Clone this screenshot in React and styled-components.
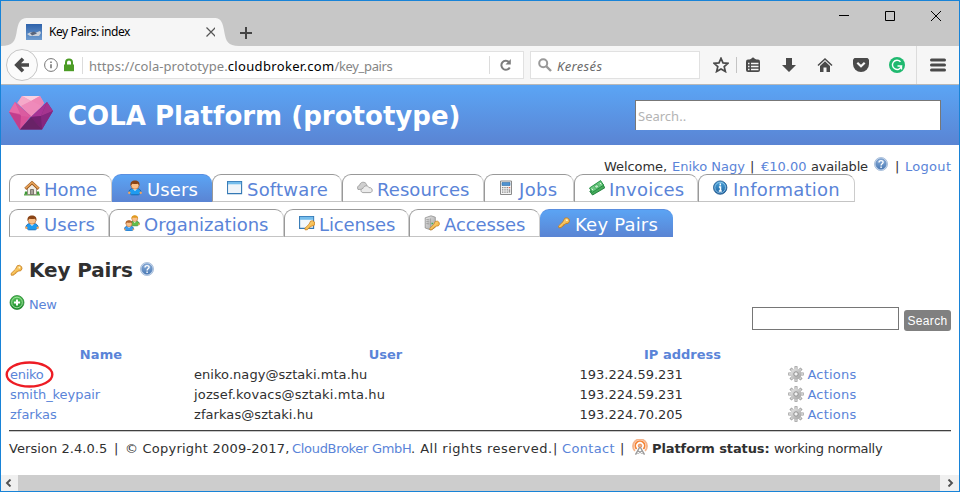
import React from "react";
import styled, { createGlobalStyle, css } from "styled-components";

const LINK = "#5a84d8";
const INK = "#303030";
const blueFade = "linear-gradient(#5ba5f5, #5a84d3)";

const Global = createGlobalStyle`
  * { box-sizing: border-box; }
  body { margin: 0; background: #fff; }
  svg { display: block; flex: none; }
`;

/* ---------- window frame ---------- */
const Window = styled.div`
  width: 960px; height: 492px; border: 1px solid #1883d7; background: #fff;
  display: flex; flex-direction: column; overflow: hidden;
  font: 13px/15px "DejaVu Sans", sans-serif; color: ${INK};
`;
const TitleBar = styled.div`
  height: 45px; flex: none; background: #c7c7c7; display: flex; align-items: flex-end;
`;
const TabBody = styled.div`
  width: 190px; height: 28px; background: #f6f6f6; display: flex; align-items: center;
  margin: 0 -1px; font: 12px/16px "Noto Sans", sans-serif; color: #000; letter-spacing: -0.45px;
`;
const TabLabel = styled.span`margin: 0 auto 0 7px;`;
const NewTab = styled.div`margin: 0 0 7px 1px;`;
const WindowButtons = styled.div`
  margin-left: auto; align-self: flex-start; display: flex; gap: 35px; padding: 10px 17px 0 0;
`;
const Toolbar = styled.div`
  height: 39px; flex: none; background: #f6f6f6; border-bottom: 1px solid #b8b8b8;
  display: flex; align-items: center; padding-left: 5px;
`;
const BackButton = styled.div`
  width: 32px; height: 32px; border: 1px solid #c6c6c6; border-radius: 50%; background: #fbfbfb;
  display: flex; align-items: center; justify-content: center; z-index: 1; flex: none;
`;
const AddressBar = styled.div`
  width: 502px; height: 28px; margin-left: -16px; padding-left: 19px; flex: none;
  border: 1px solid #e1e1e1; background: #fff; display: flex; align-items: center;
  svg + svg { margin-left: 5px; }
`;
const Separator = styled.span`
  flex: none; width: 1px; height: ${p => p.$h}px; background: ${p => p.$c || "#dcdcdc"};
`;
const Url = styled.span`
  font: 13px/18px "Noto Sans", sans-serif; color: #858585; display: flex;
  margin: 1px 0 0 6px; width: 400px; white-space: pre;
`;
const UrlPart = styled.span`
  color: ${p => p.$host ? "#000" : "#858585"}; letter-spacing: ${p => p.$ls}px;
`;
const BrowserSearch = styled.div`
  width: 170px; height: 28px; margin-left: 6px; padding: 1px 0 0 7px; flex: none; border: 1px solid #e1e1e1; background: #fff;
  display: flex; align-items: center; gap: 5px;
  font: italic 13px/16px "Noto Sans", sans-serif; color: #6b6b6b; letter-spacing: 0.35px;
`;
const Tools = styled.div`
  display: flex; align-items: center; padding-left: 13px; height: 38px;
`;
const Tool = styled.span`margin-left: ${p => p.$gap || 0}px;`;

/* ---------- page ---------- */
const Banner = styled.header`
  height: 60px; flex: none; background: ${blueFade}; display: flex; align-items: flex-start; padding-left: 8px;
  > svg { margin-top: 10px; }
`;
const BannerTitle = styled.h1`
  margin: 16px 0 0 15px; font: bold 26px/30px "DejaVu Sans", sans-serif; letter-spacing: 0.02px; color: #fff; white-space: nowrap;
`;
const BannerSearch = styled.div`
  width: 306px; height: 30px; margin: 15px 18px 0 auto; padding: 7px 0 0 2px;
  border: 1px solid #777; border-bottom: 0; background: #fff;
  font: 13px/16px "Noto Sans", sans-serif; color: #b4b4b4;
`;
const Page = styled.main`
  flex: 1; padding: 0 8px; display: flex; flex-direction: column; min-height: 0;
`;
const Run = styled.span`
  flex: none; white-space: pre; width: ${p => p.$w}px; letter-spacing: ${p => p.$ls || 0}px;
  ${p => p.$link && css`color: ${LINK};`}
  ${p => p.$bold && css`font-weight: bold;`}
`;
const Account = styled.div`
  height: 29px; padding: 14px 0 0 595px; display: flex; align-items: flex-start;
  svg { margin: -2px 7px 0 0; }
`;
const Nav = styled.nav`
  display: flex; height: 28px; flex: none; margin-bottom: 7px; align-self: flex-start;
`;
const NavTab = styled.a`
  width: ${p => p.$w}px; height: 28px; padding: 4px 0 0 14px; display: flex; color: ${LINK};
  font-size: 18px; line-height: 21px; letter-spacing: ${p => p.$ls}px; white-space: nowrap;
  border: 1px solid #999; border-right-color: #ccc; border-bottom-color: #c4c4c4; border-radius: 9px 9px 0 0; background: #fff;
  svg { margin: 1px 4px 0 0; }
  ${p => p.$active && css`
    color: #fff; background: ${blueFade}; background-origin: border-box; border-color: #5b8fe0 transparent transparent;
  `}
`;
const Heading = styled.h2`
  margin: 15px 0 0; height: 22px; display: flex; font-size: 20px; line-height: 23px; letter-spacing: -0.13px;
  svg:first-child { margin: 4px 5px 0 0; }
  svg:last-child { margin: 3px 0 0 7px; }
`;
const ActionBar = styled.div`
  height: 64px; display: flex; align-items: flex-start; padding-top: 16px; flex: none;
`;
const NewLink = styled.a`
  display: flex; gap: 4px; color: ${LINK}; letter-spacing: -0.2px;
  svg { margin-top: -2px; }
`;
const Filter = styled.div`
  width: 147px; height: 23px; margin: 10px 5px 0 auto; border: 1px solid #767676;
`;
const FilterButton = styled.button`
  width: 47px; height: 21px; margin: 13px 0 0; padding: 0; border: 0; border-radius: 3px; background: #808080; color: #fff;
  font: 12px/20px "Liberation Sans", sans-serif; letter-spacing: 0.33px;
`;
const Table = styled.div`
  width: 942px; display: grid; grid-template-columns: 184px 385.5px 209px 1fr; grid-auto-rows: 20px;
  border-bottom: 1px solid #404040; box-shadow: 0 1px #c9c9c9; height: 86px; flex: none; line-height: 20px;
`;
const HeadCell = styled.div`
  color: ${LINK}; font-weight: bold; text-align: center; letter-spacing: ${p => p.$ls || 0}px;
  width: ${p => p.$w}px;
`;
const Cell = styled.div`
  padding-left: 1px; white-space: nowrap; letter-spacing: ${p => p.$ls || 0}px; position: relative;
  color: ${p => p.$link ? LINK : INK};
`;
const ActionCell = styled.div`
  display: flex; gap: 4px; color: ${LINK}; letter-spacing: 0.2px;
  svg { margin-top: 1px; }
`;
const Circled = styled.svg`
  position: absolute; left: -5px; top: -5px; overflow: visible;
`;
const Footer = styled.footer`
  display: flex; padding-top: 10px; flex: none;
  svg { margin: -2px 4px 0 0; }
`;
const ScrollBar = styled.div`
  height: 16px; flex: none; background: #f0f0f0; display: flex; align-items: center; justify-content: space-between; padding: 0 5px 0 4px;
`;
const Thumb = styled.div`height: 16px; width: 922px; margin-right: 1px; background: #cdcdcd;`;

/* ---------- icons ---------- */
const Svg = ({ w = 16, h = 16, vb, children, ...rest }) => (
  <svg width={w} height={h} viewBox={vb || `0 0 ${w} ${h}`} fill="none" {...rest}>{children}</svg>
);
const Gradients = () => (
  <Svg w={0} h={0}>
    <defs>
      <linearGradient id="blueBall" x1="0" y1="0" x2="0" y2="1"><stop stopColor="#4aa5dc" /><stop offset="1" stopColor="#1b5f9e" /></linearGradient>
      <linearGradient id="helpBall" x1="0" y1="0" x2="0" y2="1"><stop stopColor="#8fb2dc" /><stop offset="1" stopColor="#4878b4" /></linearGradient>
      <linearGradient id="greenBall" x1="0" y1="0" x2="0" y2="1"><stop stopColor="#55c457" /><stop offset="1" stopColor="#1b8a2c" /></linearGradient>
      <linearGradient id="gold" x1="0" y1="0" x2="1" y2="1"><stop stopColor="#ffe79a" /><stop offset="1" stopColor="#f0a020" /></linearGradient>
      <linearGradient id="steel" x1="0" y1="0" x2="1" y2="1"><stop stopColor="#e8e8e8" /><stop offset="1" stopColor="#a0a0a0" /></linearGradient>
      <linearGradient id="sky" x1="0" y1="0" x2="0" y2="1"><stop stopColor="#2e62ab" /><stop offset="1" stopColor="#6f9dd0" /></linearGradient>
    </defs>
  </Svg>
);
const HomeIcon = () => (
  <Svg>
    <path d="M0 14.2h16v1.3H0z" fill="#5aa546" /><path d="M1 11.5h3v3H0.5zM12 11.5h3l.5 3h-3.5z" fill="#3f9a38" />
    <path d="M3.5 8L8 4l4.5 4v6.5h-9z" fill="#f1ece4" stroke="#8c8378" strokeWidth=".8" />
    <path d="M6.5 9.5h3v5h-3z" fill="#a9a39a" stroke="#6a645c" strokeWidth=".8" />
    <path d="M1.3 8.8L8 2.7l6.7 6.1" stroke="#9d5a1d" strokeWidth="3" /><path d="M1.5 8.4L8 2.5l6.5 5.9" stroke="#e8a45c" strokeWidth="1.5" />
  </Svg>
);
const Person = ({ hair = "#8a4416", body = "#1f9bf0", edge = "#1264b0" }) => (
  <>
    <path d="M.8 12.6C.9 10 3 8.700 4.600 8.400h4.800c1.600.3 3.700 1.600 3.800 4.200L10.400 14.800H3.600z" fill={body} stroke={edge} strokeWidth=".9" />
    <path d="M4.6 8.400L7 11l2.400-2.600z" fill="#fff" /><circle cx="1.300" cy="12.700" r="1.200" fill="#f6a55e" /><circle cx="12.700" cy="12.700" r="1.200" fill="#f6a55e" />
    <ellipse cx="7" cy="5.500" rx="3.900" ry="3.700" fill="#fbc088" stroke="#a8602c" strokeWidth=".6" />
    <path d="M2.600 6C1.900 2.300 4.200.6 7 .6s5.100 1.700 4.400 5.400c-.6-1.500-1.100-2.200-1.700-2.300-1.800.5-3.600.4-5.100 0-.7.2-1.400 1-2 2.300z" fill={hair} />
  </>
);
const UserIcon = () => <Svg vb="-1 0 16 16"><Person /></Svg>;
const GroupIcon = () => (
  <Svg><g transform="translate(5.500 -.3) scale(.75)"><Person hair="#e09a1c" body="#62bd4b" edge="#2f7d28" /></g><g transform="translate(-.3 4.700) scale(.76)"><Person hair="#b0632c" body="#3e9cec" /></g></Svg>
);
const WindowIcon = () => (
  <Svg h={16}><path d="M.6 1.6h14v12H.6z" fill="#f3f8fc" stroke="#3378b4" strokeWidth="1.1" /><path d="M1 1.800h13.200v2.600H1z" fill="#75bdec" /><path d="M1.4 4.800h12.400v8.200H1.4z" fill="#eff4f9" /></Svg>
);
const KeyShape = () => (
  <path d="M8.3 1.2l2.3-.4 2 1.4.4 2.2-1.3 1.9-2.4.2-1 1.100-1.200.1-.3 1.300-1.300.3-.6 1.200-2.500.3-.4-1.700 4.500-4.400z" fill="url(#gold)" stroke="#c47a18" strokeWidth=".8" />
);
const KeyIcon = ({ w = 16, h = 16, vb = "-1.500 -2 16 16" }) => (
  <Svg w={w} h={h} vb={vb}><KeyShape /><circle cx="10.4" cy="3.2" r=".9" fill="#fff7d0" /></Svg>
);
const LicenseIcon = () => (
  <Svg><path d="M.6 1.6h14v11.800H.6z" fill="#f3f8fc" stroke="#3378b4" strokeWidth="1.1" /><path d="M1 1.800h13.200v3H1z" fill="#75bdec" /><g transform="translate(4 5) scale(.92)"><KeyShape /></g></Svg>
);
const CloudIcon = () => (
  <Svg>
    <path d="M1 9.5C-.2 7.4 1 5.6 2.6 5.3 3.2 1.4 8.5 1.2 9.6 4.6L10.5 9z" fill="#cfcfcf" stroke="#999" strokeWidth=".8" />
    <path d="M6 12.6c-2.600-.3-2.800-3.700 0-4.200.8-3.300 5-3.300 6-.8 3.600-.4 4.500 4.600 1.200 5z" fill="#ebebeb" stroke="#9d9d9d" strokeWidth=".9" />
  </Svg>
);
const CalcIcon = () => (
  <Svg w={16}><path d="M1.500 1h11v13.500h-11z" fill="#f4f4f4" stroke="#8a8a8a" /><path d="M3 2.500h8v3H3z" fill="#4e93d2" stroke="#2d6ba6" strokeWidth=".6" />
    {[7, 9.2, 11.4].map(y => [3, 5.3, 7.6].map(x => <path key={x + "-" + y} d={`M${x} ${y}h1.4v1.3h-1.4z`} fill="#8b8b8b" />))}
    <path d="M9.700 7h1.500v1.300H9.700z" fill="#e46a50" /><path d="M9.700 9.200h1.500v3.500H9.700z" fill="#9a9a9a" /></Svg>
);
const MoneyIcon = () => (
  <Svg w={16} vb="0 0 16 16"><path d="M.8 11.300L13.400 3.500l2.400 4.300L3.500 15z" fill="#47a95b" stroke="#157b33" strokeWidth=".9" />
    <path d="M.5 8L11.600.6l3 4.600L3.200 12.400z" fill="#6cc880" stroke="#1b8b3c" strokeWidth=".9" /><ellipse cx="7.600" cy="6.500" rx="2" ry="1.700" fill="#c2ebc8" stroke="#2f9c4a" strokeWidth=".7" /><path d="M2.800 8.600l1 1.400M11.200 3l1 1.400" stroke="#e6f8e8" /></Svg>
);
const InfoIcon = () => (
  <Svg vb="0 0 16 16"><circle cx="7.200" cy="7.600" r="6.700" fill="url(#blueBall)" stroke="#1c5288" strokeWidth=".8" /><circle cx="7.200" cy="7.600" r="5.300" stroke="#a9d5f0" strokeWidth=".7" /><path d="M7.300 3.600v1.800M5.900 6.900h1.600v4M5.800 11.100h3" stroke="#fff" strokeWidth="1.500" /></Svg>
);
const ServerKeyIcon = () => (
  <Svg><path d="M1.200 2.800L7 .8l4.300 1.400v10L7 15l-5.800-2z" fill="url(#steel)" stroke="#8f8f8f" strokeWidth=".8" /><path d="M6.600 3.400v11" stroke="#999" strokeWidth=".8" /><path d="M2.400 4.600l3 .3M2.400 6.600l3 .3M2.400 8.600l3 .3" stroke="#8f8f8f" strokeWidth=".8" /><path d="M7.500 8.500h1.600" stroke="#41b34a" strokeWidth="1.400" /><g transform="translate(4 5.400) scale(.88)"><KeyShape /></g></Svg>
);
const HelpIcon = () => (
  <Svg w={14} h={14}><circle cx="7" cy="7" r="6.600" fill="#c8d9ee" stroke="#8da9cc" strokeWidth=".6" /><circle cx="7" cy="7" r="5.200" fill="url(#helpBall)" stroke="#5a83b8" strokeWidth=".6" /><path d="M5 5.600c0-2.600 4.100-2.500 4.100-.3C9.100 6.800 7.100 6.700 7.100 8.400M7.100 9.500v1.400" stroke="#fff" strokeWidth="1.400" /></Svg>
);
const PlusIcon = () => (
  <Svg w={16} h={15} vb="-.5 0 16 15"><circle cx="7.500" cy="7.500" r="7" fill="url(#greenBall)" stroke="#1d7c2a" strokeWidth=".7" /><circle cx="7.500" cy="7.500" r="5.300" stroke="#b5e6b3" strokeWidth=".8" /><path d="M7.500 4.400v6.200M4.400 7.500h6.200" stroke="#fff" strokeWidth="2" /></Svg>
);
const GearIcon = () => (
  <Svg><g stroke="#979797" strokeWidth="3"><path d="M8 .3v15.400M.3 8h15.400M2.500 2.500l11 11M13.500 2.500l-11 11" /></g><g stroke="#cfcfcf" strokeWidth="1.800"><path d="M8 1v14M1 8h14M3 3l10 10M13 3L3 13" /></g><circle cx="8" cy="8" r="5.400" fill="url(#steel)" /><circle cx="8" cy="8" r="2.200" fill="#f2f2f2" stroke="#909090" strokeWidth="1" /></Svg>
);
const AntennaIcon = () => (
  <Svg><path d="M2.900 12A7 7 0 1 1 13.100 12" stroke="#f4b48c" strokeWidth="1.800" /><path d="M4.600 10a4.700 4.700 0 1 1 6.800 0" stroke="#f58436" strokeWidth="1.800" /><circle cx="8" cy="6.800" r="1.800" fill="#f6ae80" stroke="#d86a2c" strokeWidth=".6" /><path d="M7.800 8L3.500 15.700M8.200 8l4.300 7.700M6 12l4.500 2.500M10 12l-4.500 2.500" stroke="#999" strokeWidth="1.400" /></Svg>
);
const LogoIcon = () => (
  <Svg w={44} h={36}>
    <path d="M13 1h18l4 7-13 13L8 8z" fill="#f191bd" /><path d="M13 1h18l-9 5z" fill="#fad0e1" /><path d="M22 6L12 11.500l-3-4L13 1z" fill="#f5a9c9" /><path d="M31 1l4 7-2 3.500L22 6z" fill="#ee86b5" /><path d="M12 11l10-5 11 5.500L22 22z" fill="#ef8aba" />
    <path d="M6 7L0 17l11 18 11-14z" fill="#d95199" /><path d="M6 7l6 12-12-2z" fill="#e76ba9" /><path d="M0 17l12 3-1 15z" fill="#c23e8c" /><path d="M6 7l16 15-10-1z" fill="#db5ba0" />
    <path d="M38 7l6 9-11 18.500H11L22 22z" fill="#85267f" /><path d="M38 7l-6 14-10 1z" fill="#a83395" /><path d="M38 7l6 9-12 5z" fill="#a5348f" /><path d="M22 22l11-1 0 13.500z" fill="#742070" /><path d="M22 22L11 34.500h22z" fill="#692267" /><path d="M32 21l12-5-11 18.500z" fill="#85267f" />
  </Svg>
);

const MAIN = [
  ["Home", HomeIcon, 103, -0.03], ["Users", UserIcon, 100, 0.1, true], ["Software", WindowIcon, 130, 0.2], ["Resources", CloudIcon, 142, 0.06],
  ["Jobs", CalcIcon, 90, 0.35], ["Invoices", MoneyIcon, 124, 0.2], ["Information", InfoIcon, 157, 0.25],
];
const SUB = [
  ["Users", UserIcon, 100, 0.1], ["Organizations", GroupIcon, 175, 0], ["Licenses", LicenseIcon, 125, -0.12],
  ["Accesses", ServerKeyIcon, 131, -0.1], ["Key Pairs", KeyIcon, 133, 0.2, true],
];
const ROWS = [
  ["eniko", "eniko.nagy@sztaki.mta.hu", "193.224.59.231", -0.3, 0.05],
  ["smith_keypair", "jozsef.kovacs@sztaki.mta.hu", "193.224.59.231", -0.05, 0.16],
  ["zfarkas", "zfarkas@sztaki.hu", "193.224.70.205", 0, 0.07],
];
const Tabs = ({ items }) => (
  <Nav>{items.map(([label, Icon, w, ls, active]) => <NavTab key={label} $w={w} $ls={ls} $active={active}><Icon />{label}</NavTab>)}</Nav>
);

const Browser = () => (
  <>
    <TitleBar>
      <Svg w={26} h={28}><path d="M0 28C12 28 14 23 15.500 15C17 5 19 0 26 0V28z" fill="#f6f6f6" /></Svg>
      <TabBody>
        <Svg><path d="M0 0h16v16H0z" fill="url(#sky)" /><path d="M1 10l4-2 4 1 5-2 1 2-2 3H4z" fill="#ccd2da" /><path d="M4 9l4-1.500 3 2-5 2z" fill="#59657a" /></Svg>
        <TabLabel>Key Pairs: index</TabLabel>
        <Svg w={10} h={10}><path d="M.5.5l9 9M9.500.5l-9 9" stroke="#555" strokeWidth="1.200" /></Svg>
      </TabBody>
      <Svg w={24} h={28}><path d="M24 28C13 28 11 23 9.500 15C8 5 6 0 0 0V28z" fill="#f6f6f6" /></Svg>
      <NewTab><Svg w={12} h={12}><path d="M6 0v12M0 6h12" stroke="#444" strokeWidth="2" /></Svg></NewTab>
      <WindowButtons>
        <Svg w={11} h={11}><path d="M0 4.500h10" stroke="#000" /></Svg>
        <Svg w={11} h={11}><path d="M.5.5h9v9h-9z" stroke="#000" /></Svg>
        <Svg w={11} h={11}><path d="M0 0l10 10M10 0L0 10" stroke="#000" /></Svg>
      </WindowButtons>
    </TitleBar>
    <Toolbar>
      <BackButton><Svg><path d="M9 1.800L2.800 8 9 14.200M3.500 8H15" stroke="#4a4a4a" strokeWidth="3.600" /></Svg></BackButton>
      <AddressBar>
        <Svg w={16}><circle cx="9" cy="8" r="6.400" stroke="#777" /><path d="M9 4.500v1.500M9 7.300v4" stroke="#777" strokeWidth="1.600" /></Svg>
        <Svg w={12}><path d="M3 8V5.500a3 3 0 0 1 6 0V8" stroke="#4c9c26" strokeWidth="2" /><path d="M1 7.500h10v6.700H1z" fill="#4c9c26" /></Svg>
        <Tool $gap={7}><Separator as="div" $h={17} /></Tool>
        <Url><UrlPart $ls={0.06}>https://cola-prototype.</UrlPart><UrlPart $host $ls={0.33}>cloudbroker.com</UrlPart><UrlPart $ls={-0.35}>/key_pairs</UrlPart></Url>
        <Separator $h={18} />
        <Tool $gap={9}><Svg w={13} h={14}><path d="M10.800 9.500A4.500 4.500 0 1 1 10 4" stroke="#7c7c7c" strokeWidth="2" /><path d="M11.800 1v5.500H6.500z" fill="#7c7c7c" /></Svg></Tool>
      </AddressBar>
      <BrowserSearch><Svg w={14} h={15}><circle cx="5.200" cy="5.200" r="4" stroke="#999" strokeWidth="2" /><path d="M8 8l5 5" stroke="#999" strokeWidth="2.400" /></Svg><span>Keresés</span></BrowserSearch>
      <Tools>
        <Svg><path d="M8 1.300l2 4.600 5 .4-3.800 3.300 1.200 4.900L8 11.900l-4.400 2.600 1.200-4.900L1 6.300l5-.4z" stroke="#4a4a4a" strokeWidth="1.700" /></Svg>
        <Tool $gap={7}><Separator as="div" $h={16} $c="#c4c4c4" /></Tool>
        <Tool $gap={8}><Svg><path d="M3 2.500h10q2 0 2 2V13q0 2-2 2H3q-2 0-2-2V4.500q0-2 2-2z" fill="#4a4a4a" /><path d="M4.500 3L8 .2 11.500 3z" fill="#4a4a4a" /><path d="M3 6.500h1.500M6 6.500h7.500M3 9.500h1.500M6 9.500h7.500M3 12.500h1.500M6 12.500h7.500" stroke="#f6f6f6" strokeWidth="1.700" /></Svg></Tool>
        <Tool $gap={20}><Svg><path d="M5 1h6v7h4l-7 7-7-7h4z" fill="#4a4a4a" /></Svg></Tool>
        <Tool $gap={20}><Svg><path d="M1 8.500L8 2l7 6.500" stroke="#4a4a4a" strokeWidth="1.500" /><path d="M3 9l5-4.700L13 9v6H9.500v-4.500h-3V15H3z" fill="#4a4a4a" /></Svg></Tool>
        <Tool $gap={20}><Svg><path d="M1.500 1h13L16 2.500V7a8 8 0 0 1-16 0V2.500z" fill="#4a4a4a" /><path d="M4.300 5.800L8 9.300l3.700-3.500" stroke="#f6f6f6" strokeWidth="2.200" /></Svg></Tool>
        <Tool $gap={20}><Svg><circle cx="8" cy="8" r="8" fill="#1fb96f" /><path d="M11.500 4.800A4.600 4.600 0 1 0 12.500 9H8.500M12.500 9v3.500" stroke="#fff" strokeWidth="1.400" /></Svg></Tool>
        <Tool $gap={11}><Separator as="div" $h={38} /></Tool>
        <Tool $gap={13}><Svg><path d="M1.500 3h13M1.500 8h13M1.500 13h13" stroke="#4a4a4a" strokeWidth="3" strokeLinecap="round" /></Svg></Tool>
      </Tools>
    </Toolbar>
  </>
);

export default function App() {
  return (
    <Window>
      <Global />
      <Browser />
      <Banner>
        <LogoIcon />
        <BannerTitle>COLA Platform (prototype)</BannerTitle>
        <BannerSearch>Search..</BannerSearch>
      </Banner>
      <Page>
        <Account>
          <Run $w={68} $ls={-0.07}>Welcome,</Run><Run $w={78} $link>Eniko Nagy</Run><Run $w={11}>|</Run>
          <Run $w={50} $link>€10.00</Run><Run $w={63} $ls={-0.2}>available</Run><HelpIcon /><Run $w={10}>|</Run><Run $w={46} $link $ls={0.3}>Logout</Run>
        </Account>
        <Tabs items={MAIN} />
        <Tabs items={SUB} />
        <Heading><KeyIcon w={15} h={15} vb="0 -1.500 15 15" />Key Pairs<HelpIcon /></Heading>
        <ActionBar>
          <NewLink><PlusIcon />New</NewLink>
          <Filter />
          <FilterButton>Search</FilterButton>
        </ActionBar>
        <Table>
          <HeadCell $w={184} $ls={0.1}>Name</HeadCell><HeadCell $w={385}>User</HeadCell><HeadCell $w={208}>IP address</HeadCell><HeadCell />
          {ROWS.map(([name, user, ip, nls, uls], i) => (
            <React.Fragment key={name}>
              <Cell $link $ls={nls}>{name}{i === 0 && <Circled width="50" height="28"><ellipse cx="25.500" cy="14.500" rx="22.800" ry="12" fill="none" stroke="#ed1c24" strokeWidth="2.400" /></Circled>}</Cell>
              <Cell $ls={uls}>{user}</Cell><Cell>{ip}</Cell>
              <ActionCell><GearIcon />Actions</ActionCell>
            </React.Fragment>
          ))}
        </Table>
        <Footer>
          <Run $w={105} $ls={0.06}>Version 2.4.0.5</Run><Run $w={11}>|</Run><Run $w={167} $ls={0.22}>© Copyright 2009-2017,</Run>
          <Run $w={119} $link $ls={-0.31}>CloudBroker GmbH</Run><Run $w={142} $ls={0.47}>. All rights reserved.</Run><Run $w={9}>|</Run>
          <Run $w={58} $link $ls={0.35}>Contact</Run><Run $w={12}>|</Run><AntennaIcon /><Run $w={122} $bold $ls={-0.1}>Platform status:</Run><Run $w={112} $ls={-0.26}>working normally</Run>
        </Footer>
      </Page>
      <ScrollBar>
        <Svg w={7} h={8}><path d="M5.500.5L2 4l3.500 3.500" stroke="#505050" strokeWidth="1.900" /></Svg>
        <Thumb />
        <Svg w={7} h={8}><path d="M1.500.5L5 4 1.500 7.500" stroke="#505050" strokeWidth="1.900" /></Svg>
      </ScrollBar>
      <Gradients />
    </Window>
  );
}
